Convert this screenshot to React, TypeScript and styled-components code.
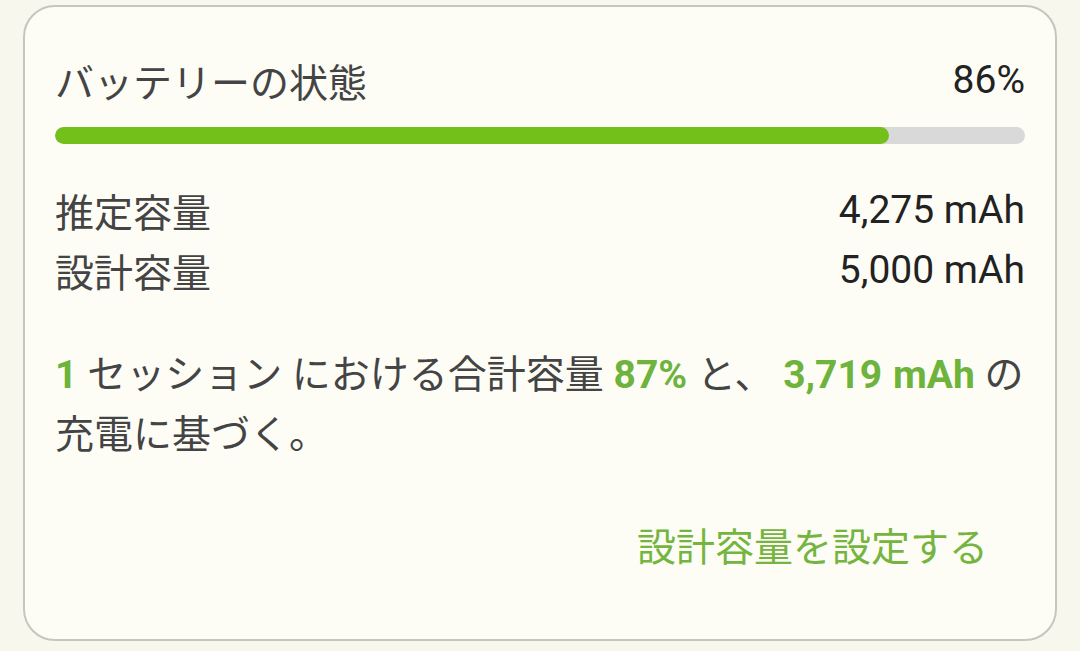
import React from "react";
import styled, { createGlobalStyle } from "styled-components";

const Global = createGlobalStyle`
  html, body {
    margin: 0;
    padding: 0;
    background: #f7f7ee;
  }
  body {
    font-family: Roboto, "Noto Sans CJK JP", sans-serif;
  }
`;

const Page = styled.div`
  padding: 5px 23px 0 23px;
`;

const Card = styled.section`
  box-sizing: border-box;
  width: 1034px;
  height: 636px;
  background: #fdfdf6;
  border: 2px solid #c6c6be;
  border-radius: 32px;
  padding: 51px 30px 0 30px;
  display: flex;
  flex-direction: column;
`;

const Row = styled.div<{ $h: number }>`
  display: flex;
  justify-content: space-between;
  align-items: center;
  height: ${(p) => p.$h}px;
`;

const Label = styled.span`
  font-family: "Noto Sans CJK JP", sans-serif;
  font-size: 39px;
  color: #444444;
  line-height: 1;
`;

const Value = styled.span`
  font-family: Roboto, "Noto Sans CJK JP", sans-serif;
  font-size: 39px;
  color: #222222;
  line-height: 1;
`;

const Track = styled.div`
  margin-top: 25px;
  margin-bottom: 36px;
  height: 17px;
  border-radius: 9px;
  background: #d9d9d9;
  overflow: hidden;
`;

const Fill = styled.div`
  height: 100%;
  background: #73c01a;
  border-radius: 9px;
`;

const Note = styled.p`
  margin: 43px 0 0 0;
  font-family: "Noto Sans CJK JP", sans-serif;
  font-size: 39px;
  line-height: 56px;
  word-spacing: 1px;
  color: #444444;
`;

const Em = styled.b`
  font-family: Roboto, sans-serif;
  font-weight: 700;
  color: #6db33c;
`;

const Actions = styled.div`
  margin-top: 60px;
  display: flex;
  justify-content: flex-end;
  padding-right: 37px;
`;

const LinkButton = styled.button`
  border: none;
  background: none;
  padding: 0;
  font-family: "Noto Sans CJK JP", sans-serif;
  font-size: 39px;
  line-height: 50px;
  color: #75b53f;
  cursor: pointer;
`;

const percent = 86;

export default function App() {
  return (
    <>
      <Global />
      <Page>
        <Card>
          <Row $h={44}>
            <Label>バッテリーの状態</Label>
            <Value>{percent}%</Value>
          </Row>
          <Track>
            <Fill style={{ width: `${percent}%` }} />
          </Track>
          <Row $h={60}>
            <Label>推定容量</Label>
            <Value>4,275 mAh</Value>
          </Row>
          <Row $h={60}>
            <Label>設計容量</Label>
            <Value>5,000 mAh</Value>
          </Row>
          <Note>
            <Em>1</Em> セッション における合計容量 <Em>87%</Em> と、 <Em>3,719 mAh</Em> の充電に基づく。
          </Note>
          <Actions>
            <LinkButton>設計容量を設定する</LinkButton>
          </Actions>
        </Card>
      </Page>
    </>
  );
}
